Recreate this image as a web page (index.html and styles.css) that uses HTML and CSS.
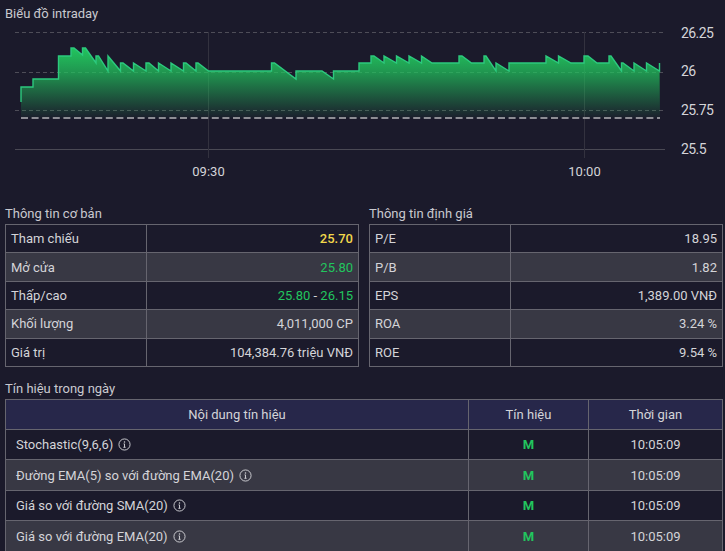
FILE: index.html
```html
<!DOCTYPE html>
<html lang="vi">
  <head>
    <meta charset="UTF-8" />
    <meta name="viewport" content="width=device-width, initial-scale=1.0" />
    <title>Biểu đồ intraday</title>
    <link rel="stylesheet" href="styles.css">
  </head>
  <body>
    <h3 class="title chart-title">Biểu đồ intraday</h3>
    <svg class="chart" viewBox="0 24 725 179" width="725" height="179">
      <defs>
        <linearGradient id="areaFill" gradientUnits="userSpaceOnUse" x1="0" y1="48" x2="0" y2="118">
          <stop offset="0" stop-color="#22c55e" stop-opacity="1" />
          <stop offset="0.35" stop-color="#22c55e" stop-opacity="0.72" />
          <stop offset="1" stop-color="#22c55e" stop-opacity="0.03" />
        </linearGradient>
      </defs>
      <!-- grid -->
      <line class="grid" x1="15" y1="32.5" x2="665" y2="32.5" />
      <line class="grid" x1="15" y1="72.5" x2="665" y2="72.5" />
      <line class="grid" x1="15" y1="110.5" x2="665" y2="110.5" />
      <line class="base" x1="15" y1="149.5" x2="665" y2="149.5" />
      <line class="vline" x1="208.5" y1="32" x2="208.5" y2="158" />
      <line class="vline" x1="584.5" y1="32" x2="584.5" y2="158" />
      <!-- price -->
      <path class="area" d="M21 102V87H33V79H58.5V56H71V48H74L82.5 55V48H85.5L96 63V56H98.5L108 71V56L120.5 71V63H123L133.5 71V63L146 71V63H149L158.5 71V63L171 71V63L183.5 71V63H186L196 71V63H198L208.5 71H271.5V63H274.5L296 79V71H322L333.5 79V71H359V63H371V56H374L384 63V56L396.5 63V56L409 63V56L421.5 63V56L432 63H459V56H462L471.5 63H484V56H486L496 71V63L509 71V63H546V56L558.5 63V56L571 63H584V56H588L597 63H609V56H611L621.5 71V63H623L634 71V63L646.5 71V63L659.5 71V63L660 118H21Z" />
      <path class="price" d="M21 102V87H33V79H58.5V56H71V48H74L82.5 55V48H85.5L96 63V56H98.5L108 71V56L120.5 71V63H123L133.5 71V63L146 71V63H149L158.5 71V63L171 71V63L183.5 71V63H186L196 71V63H198L208.5 71H271.5V63H274.5L296 79V71H322L333.5 79V71H359V63H371V56H374L384 63V56L396.5 63V56L409 63V56L421.5 63V56L432 63H459V56H462L471.5 63H484V56H486L496 71V63L509 71V63H546V56L558.5 63V56L571 63H584V56H588L597 63H609V56H611L621.5 71V63H623L634 71V63L646.5 71V63L659.5 71V63" />
      <line class="ref" x1="21" y1="118" x2="660" y2="118" />
      <!-- axis labels -->
      <text class="label price-label" x="681" y="38">26.25</text>
      <text class="label price-label" x="681" y="76">26</text>
      <text class="label price-label" x="681" y="115">25.75</text>
      <text class="label price-label" x="681" y="154">25.5</text>
      <text class="label mid" x="208.5" y="176">09:30</text>
      <text class="label mid" x="584.5" y="176">10:00</text>
    </svg>

    <div class="info">
      <div>
        <h3 class="title">Thông tin cơ bản</h3>
        <table class="tbl info-tbl">
          <tr><td>Tham chiếu</td><td class="num yellow">25.70</td></tr>
          <tr><td>Mở cửa</td><td class="num green">25.80</td></tr>
          <tr><td>Thấp/cao</td><td class="num"><span class="green">25.80</span> - <span class="green">26.15</span></td></tr>
          <tr><td>Khối lượng</td><td class="num">4,011,000 CP</td></tr>
          <tr><td>Giá trị</td><td class="num">104,384.76 triệu VNĐ</td></tr>
        </table>
      </div>
      <div>
        <h3 class="title">Thông tin định giá</h3>
        <table class="tbl info-tbl">
          <tr><td>P/E</td><td class="num">18.95</td></tr>
          <tr><td>P/B</td><td class="num">1.82</td></tr>
          <tr><td>EPS</td><td class="num">1,389.00 VNĐ</td></tr>
          <tr><td>ROA</td><td class="num">3.24 %</td></tr>
          <tr><td>ROE</td><td class="num">9.54 %</td></tr>
        </table>
      </div>
    </div>

    <div class="signals">
      <h3 class="title">Tín hiệu trong ngày</h3>
      <table class="tbl signal-tbl">
        <thead>
          <tr><th class="col-name">Nội dung tín hiệu</th><th class="col-sig">Tín hiệu</th><th>Thời gian</th></tr>
        </thead>
        <tbody>
          <tr>
            <td>Stochastic(9,6,6) <svg class="icon" viewBox="0 0 14 14"><circle cx="7" cy="7" r="6" /><path d="M7 6.3V10M5.8 10H8.2M6 6.3H7" /><circle class="dot" cx="7" cy="4.2" r="0.8" /></svg></td>
            <td class="sig">M</td><td class="time">10:05:09</td>
          </tr>
          <tr>
            <td>Đường EMA(5) so với đường EMA(20) <svg class="icon" viewBox="0 0 14 14"><circle cx="7" cy="7" r="6" /><path d="M7 6.3V10M5.8 10H8.2M6 6.3H7" /><circle class="dot" cx="7" cy="4.2" r="0.8" /></svg></td>
            <td class="sig">M</td><td class="time">10:05:09</td>
          </tr>
          <tr>
            <td>Giá so với đường SMA(20) <svg class="icon" viewBox="0 0 14 14"><circle cx="7" cy="7" r="6" /><path d="M7 6.3V10M5.8 10H8.2M6 6.3H7" /><circle class="dot" cx="7" cy="4.2" r="0.8" /></svg></td>
            <td class="sig">M</td><td class="time">10:05:09</td>
          </tr>
          <tr>
            <td>Giá so với đường EMA(20) <svg class="icon" viewBox="0 0 14 14"><circle cx="7" cy="7" r="6" /><path d="M7 6.3V10M5.8 10H8.2M6 6.3H7" /><circle class="dot" cx="7" cy="4.2" r="0.8" /></svg></td>
            <td class="sig">M</td><td class="time">10:05:09</td>
          </tr>
        </tbody>
      </table>
    </div>
  </body>
</html>
```

FILE: styles.css
```css
* {
  margin: 0;
  padding: 0;
  box-sizing: border-box;
}
html,
body {
  height: 551px;
  overflow: hidden;
}
body {
  background: #1b1a2b;
  color: #d4d4d8;
  font-family: Roboto, "Liberation Sans", sans-serif;
  font-size: 13px;
}
.title {
  font-size: 13px;
  font-weight: 400;
  line-height: 18px;
  color: #c9c9cf;
  margin-bottom: 1px;
}
.chart-title {
  padding: 5px 0 0 5px;
  margin-bottom: 0;
  height: 24px;
}
.chart {
  display: block;
}
.grid {
  stroke: #4e4d58;
  stroke-width: 1;
  stroke-dasharray: 4 3;
}
.base {
  stroke: #4a4954;
  stroke-width: 1;
}
.vline {
  stroke: #33323f;
  stroke-width: 1;
}
.area {
  fill: url(#areaFill);
}
.price {
  fill: none;
  stroke: #2cc97e;
  stroke-width: 1.4;
}
.ref {
  stroke: #8d8d94;
  stroke-width: 2;
  stroke-dasharray: 7 3.6;
}
.label {
  fill: #d4d4d8;
  font-size: 13px;
}
.label.mid {
  text-anchor: middle;
}
.price-label {
  font-size: 14px;
  letter-spacing: -0.6px;
}
.info {
  display: grid;
  grid-template-columns: 354px 354px;
  gap: 10px;
  padding-left: 5px;
  margin-top: 2px;
}
.tbl {
  width: 100%;
  border-collapse: collapse;
  table-layout: fixed;
}
.tbl td,
.tbl th {
  border: 1px solid #66656f;
  font-weight: 400;
}
.tbl tr:nth-child(even) td {
  background: #383844;
}
.info-tbl td {
  height: 28.4px;
  padding: 0 5px;
  white-space: nowrap;
}
.info-tbl td:first-child {
  width: 141px;
}
.num {
  text-align: right;
}
.tbl .yellow {
  color: #f2d84b;
  font-weight: 500;
}
.tbl .green {
  color: #22c55e;
}
.signals {
  padding-left: 5px;
  margin-top: 13px;
  width: 723px;
}
.signal-tbl th {
  height: 30px;
  background: #27274a;
  text-align: center;
}
.signal-tbl td {
  height: 30.5px;
  padding-left: 10px;
  white-space: nowrap;
}
.col-name {
  width: 463px;
}
.col-sig {
  width: 120px;
}
.signal-tbl .sig {
  padding-left: 0;
  text-align: center;
  font-weight: 700;
  color: #22c55e;
}
.signal-tbl .time {
  padding-left: 0;
  text-align: center;
}
.icon {
  width: 13px;
  height: 13px;
  margin-left: 2px;
  vertical-align: -2px;
  fill: none;
  stroke: #d4d4d8;
  stroke-width: 1;
}
.icon .dot {
  fill: #d4d4d8;
  stroke: none;
}
```
